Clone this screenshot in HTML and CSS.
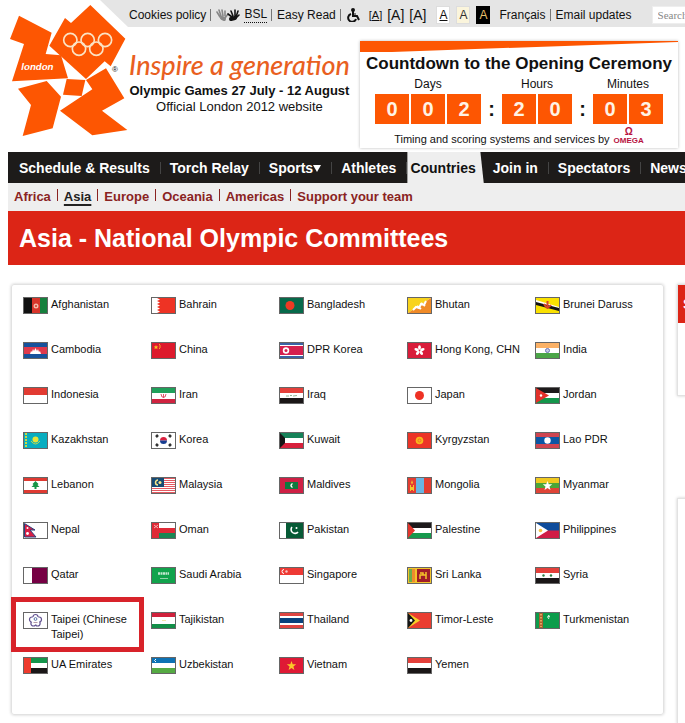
FILE: index.html
```html
<!DOCTYPE html>
<html lang="en">

<head>
    <meta charset="UTF-8">
    <meta name="viewport" content="width=device-width, initial-scale=1.0">
    <link rel="stylesheet" href="styles.css">
    <title>Asia - National Olympic Committees</title>
</head>

<body>
    <header class="header">
        <a href="#" class="logo" aria-label="London 2012">
            <svg viewBox="24 0 363 426" width="121" height="142">
                <g fill="#fd5602">
                    <polygon points="57,47 155,98 137,162 183,166 204,235 36,244 72,132 30,117" />
                    <polygon points="271,15 376,116 332,199 314,184 258,237 148,137 195,54 213,69" />
                    <polygon points="200,237 256,240 245,288 189,284" />
                    <polygon points="54,266 140,243 183,290 158,385 68,408 93,315" />
                    <polygon points="318,205 373,295 306,332 382,390 277,406 180,332 277,268 258,240" />
                </g>
                <g fill="none" stroke="#fbe3c4" stroke-width="5">
                    <circle cx="211" cy="120" r="20" />
                    <circle cx="263" cy="120" r="20" />
                    <circle cx="315" cy="120" r="20" />
                    <circle cx="237" cy="146" r="20" />
                    <circle cx="289" cy="146" r="20" />
                </g>
                <text x="64" y="210" class="logo-name">london</text>
                <text x="336" y="216" class="logo-mark">®</text>
            </svg>
        </a>
        <div class="header-main">
            <div class="toolbar">
                <a href="#">Cookies policy</a>
                <span class="bar"></span>
                <svg class="hands" viewBox="0 0 24 14" width="24" height="14" fill="none" stroke-linecap="round">
                    <g stroke="#888" stroke-width="1.6">
                        <path d="M4 9L1 4M5 8L3 2M7 8L6 2M9 8V3M9 10L12 6" />
                        <path d="M6 10L8 11" stroke-width="4" />
                    </g>
                    <g stroke="#111" stroke-width="1.6">
                        <path d="M16 9L12 6M17 8L15 3M19 8L19 2M20 9L22 3M20 10L23 7" />
                        <path d="M15 11L19 10" stroke-width="4" />
                    </g>
                </svg>
                <a href="#" class="bsl">BSL</a>
                <span class="bar"></span>
                <a href="#">Easy Read</a>
                <span class="bar"></span>
                <svg class="wheelchair" viewBox="0 0 14 14" width="14" height="14" fill="none" stroke="#111" stroke-width="2">
                    <circle cx="7" cy="2" r="1" />
                    <path d="M7 3V8H11L13 12" />
                    <path d="M5 6A4 4 0 1 0 10 11" />
                    <path d="M7 6H10" stroke-width="1" />
                </svg>
                <div class="sizes">
                    <a href="#" class="size-small">[<u>A</u>]</a>
                    <a href="#">[A]</a>
                    <a href="#">[A]</a>
                </div>
                <div class="themes">
                    <button class="theme"><u>A</u></button>
                    <button class="theme theme-cream">A</button>
                    <button class="theme theme-dark">A</button>
                </div>
                <a href="#">Français</a>
                <span class="bar"></span>
                <a href="#">Email updates</a>
                <input type="text" class="search" placeholder="Search" aria-label="Search">
            </div>
            <div class="intro">
                <div class="tagline">
                    <p class="slogan">Inspire a generation</p>
                    <p class="dates">Olympic Games 27 July - 12 August</p>
                    <p class="official">Official London 2012 website</p>
                </div>
                <div class="countdown">
                    <div class="wedge"></div>
                    <h2 class="countdown-title">Countdown to the Opening Ceremony</h2>
                    <div class="clock">
                        <div class="unit">
                            <span>Days</span>
                            <div class="digits"><b>0</b><b>0</b><b>2</b></div>
                        </div>
                        <span class="colon">:</span>
                        <div class="unit">
                            <span>Hours</span>
                            <div class="digits"><b>2</b><b>0</b></div>
                        </div>
                        <span class="colon">:</span>
                        <div class="unit">
                            <span>Minutes</span>
                            <div class="digits"><b>0</b><b>3</b></div>
                        </div>
                    </div>
                    <div class="timing">
                        <span>Timing and scoring systems and services by</span>
                        <span class="omega"><span class="omega-sign">Ω</span>OMEGA</span>
                    </div>
                </div>
            </div>
        </div>
    </header>

    <div class="wrapper">
        <!-- Main navigation -->
        <nav class="nav">
            <a href="#">Schedule &amp; Results</a>
            <a href="#">Torch Relay</a>
            <a href="#">Sports<span class="arrow"></span></a>
            <a href="#">Athletes</a>
            <a href="#" class="current">Countries</a>
            <a href="#">Join in</a>
            <a href="#">Spectators</a>
            <a href="#">News</a>
        </nav>
        <nav class="subnav">
            <a href="#">Africa</a>
            <a href="#" class="current">Asia</a>
            <a href="#">Europe</a>
            <a href="#">Oceania</a>
            <a href="#">Americas</a>
            <a href="#">Support your team</a>
        </nav>
        <h1 class="title">Asia - National Olympic Committees</h1>

        <div class="content">
            <!-- Countries -->
            <ul class="countries">
                <li><svg class="flag" viewBox="0 0 23 15"><path fill="#111" d="M0 0h8v15H0z"/><path fill="#d8352a" d="M8 0h8v15H8z"/><path fill="#15803d" d="M16 0h7v15h-7z"/><circle cx="12" cy="8" r="2.5" fill="#f3b9a8"/><circle cx="12" cy="8" r="1" fill="#d8352a"/></svg><a href="#">Afghanistan</a></li>
                <li><svg class="flag" viewBox="0 0 23 15"><path fill="#ee3324" d="M0 0h23v15H0z"/><path fill="#fff" d="M0 0h5l3 1.500-3 1.500 3 1.500-3 1.500 3 1.500-3 1.500 3 1.500-3 1.500 3 1.500-3 1.500H0z"/></svg><a href="#">Bahrain</a></li>
                <li><svg class="flag" viewBox="0 0 23 15"><path fill="#07694a" d="M0 0h23v15H0z"/><circle cx="10" cy="7.500" r="4.500" fill="#ee3a24"/></svg><a href="#">Bangladesh</a></li>
                <li><svg class="flag" viewBox="0 0 23 15"><path fill="#f8d31c" d="M0 0h23L0 15z"/><path fill="#f08a27" d="M23 0v15H0z"/><path fill="none" stroke="#fff" stroke-width="2" d="M5 12l3-3 3 1 2-4 3 1 2-4M9 8l4 3M13 5l4 3"/></svg><a href="#">Bhutan</a></li>
                <li><svg class="flag" viewBox="0 0 23 15"><path fill="#fae100" d="M0 0h23v15H0z"/><path fill="#fff" d="M0 2l23 7v3L0 5z"/><path fill="#111" d="M0 4l23 6v3L0 7z"/><path fill="none" stroke="#d9442a" stroke-width="2" d="M8 6q3 6 7 1M11.500 3v8"/></svg><a href="#">Brunei Daruss</a></li>

                <li><svg class="flag" viewBox="0 0 23 15"><path fill="#17529c" d="M0 0h23v15H0z"/><path fill="#e0394b" d="M0 4h23v7H0z"/><path fill="#fff" d="M6 11l1-3 1 1 1-3 1 2 1.500-3L13 8l1-2 1 3 1-1 1 3z"/></svg><a href="#">Cambodia</a></li>
                <li><svg class="flag" viewBox="0 0 23 15"><path fill="#dd1a2c" d="M0 0h23v15H0z"/><path fill="#f9c623" d="M4 2l.7 1.500 1.600.1-1.200 1 .4 1.600L4 5.300l-1.500.9.4-1.600-1.200-1 1.600-.1z"/><path fill="none" stroke="#f9a623" d="M7 1l1 1v3L7 6"/></svg><a href="#">China</a></li>
                <li><svg class="flag" viewBox="0 0 23 15"><path fill="#3c63a5" d="M0 0h23v15H0z"/><path fill="#fff" d="M0 2h23v11H0z"/><path fill="#d5204e" d="M0 3h23v9H0z"/><circle cx="6" cy="7.500" r="3.200" fill="#fff"/><circle cx="6" cy="7.500" r="1.500" fill="#d5204e"/></svg><a href="#">DPR Korea</a></li>
                <li><svg class="flag" viewBox="0 0 23 15"><path fill="#d91c3a" d="M0 0h23v15H0z"/><g fill="#fff"><ellipse cx="11.500" cy="4.500" rx="1.400" ry="2.300"/><ellipse cx="11.500" cy="4.500" rx="1.400" ry="2.300" transform="rotate(72 11.500 7.500)"/><ellipse cx="11.500" cy="4.500" rx="1.400" ry="2.300" transform="rotate(144 11.500 7.500)"/><ellipse cx="11.500" cy="4.500" rx="1.400" ry="2.300" transform="rotate(216 11.500 7.500)"/><ellipse cx="11.500" cy="4.500" rx="1.400" ry="2.300" transform="rotate(288 11.500 7.500)"/></g></svg><a href="#">Hong Kong, CHN</a></li>
                <li><svg class="flag" viewBox="0 0 23 15"><path fill="#fff" d="M0 0h23v15H0z"/><path fill="#fbb166" d="M0 0h23v5H0z"/><path fill="#4ba547" d="M0 10h23v5H0z"/><circle cx="11.500" cy="7.500" r="2" fill="#c7cbe5" stroke="#6a72b4"/></svg><a href="#">India</a></li>

                <li><svg class="flag" viewBox="0 0 23 15"><path fill="#fff" d="M0 0h23v15H0z"/><path fill="#e23b32" d="M0 0h23v7H0z"/></svg><a href="#">Indonesia</a></li>
                <li><svg class="flag" viewBox="0 0 23 15"><path fill="#fff" d="M0 0h23v15H0z"/><path fill="#1fa05a" d="M0 0h23v5H0z"/><path fill="#d02340" d="M0 11h23v4H0z"/><path fill="none" stroke="#e0566a" d="M9 6l1 3h3l1-3M11.500 6v4"/></svg><a href="#">Iran</a></li>
                <li><svg class="flag" viewBox="0 0 23 15"><path fill="#fff" d="M0 0h23v15H0z"/><path fill="#e4403b" d="M0 0h23v5H0z"/><path fill="#1a1617" d="M0 10h23v5H0z"/><path fill="none" stroke="#8fb596" d="M6 8h3M10 7.500h2M13 8l4-.5"/></svg><a href="#">Iraq</a></li>
                <li><svg class="flag" viewBox="0 0 23 15"><path fill="#fff" d="M0 0h23v15H0z"/><circle cx="11.500" cy="7.500" r="4.500" fill="#ee3124"/></svg><a href="#">Japan</a></li>
                <li><svg class="flag" viewBox="0 0 23 15"><path fill="#fff" d="M0 0h23v15H0z"/><path fill="#1d1a1b" d="M0 0h23v5H0z"/><path fill="#14964b" d="M0 10h23v5H0z"/><path fill="#e2312a" d="M0 0l13 7.500L0 15z"/><circle cx="5" cy="7.500" r="1.200" fill="#fff"/></svg><a href="#">Jordan</a></li>

                <li><svg class="flag" viewBox="0 0 23 15"><path fill="#08adc0" d="M0 0h23v15H0z"/><circle cx="11.500" cy="6.500" r="3" fill="#e8e337"/><path fill="none" stroke="#b8d84b" d="M7 8q4.500 6 9 0"/><path stroke="#c4d944" stroke-width="2" stroke-dasharray="2 1" d="M2 0v15"/></svg><a href="#">Kazakhstan</a></li>
                <li><svg class="flag" viewBox="0 0 23 15"><path fill="#fff" d="M0 0h23v15H0z"/><path fill="#d9213f" d="M8 7.500a3.500 3.500 0 0 1 7 0z"/><path fill="#173e91" d="M8 7.500a3.500 3.500 0 0 0 7 0z"/><path stroke="#333" stroke-width="2.500" d="M4 4l2-2M17 2l2 2M4 11l2 2M17 13l2-2"/></svg><a href="#">Korea</a></li>
                <li><svg class="flag" viewBox="0 0 23 15"><path fill="#fff" d="M0 0h23v15H0z"/><path fill="#168259" d="M0 0h23v5H0z"/><path fill="#d8203c" d="M0 10h23v5H0z"/><path fill="#161616" d="M0 0l5 5v5l-5 5z"/></svg><a href="#">Kuwait</a></li>
                <li><svg class="flag" viewBox="0 0 23 15"><path fill="#ec3427" d="M0 0h23v15H0z"/><circle cx="11.500" cy="7.500" r="3.800" fill="#f9b61c"/><circle cx="11.500" cy="7.500" r="1.500" fill="none" stroke="#ee7824"/></svg><a href="#">Kyrgyzstan</a></li>
                <li><svg class="flag" viewBox="0 0 23 15"><path fill="#cf4550" d="M0 0h23v15H0z"/><path fill="#0b57a5" d="M0 4h23v7H0z"/><circle cx="11.500" cy="7.500" r="3.200" fill="#fff"/></svg><a href="#">Lao PDR</a></li>

                <li><svg class="flag" viewBox="0 0 23 15"><path fill="#fff" d="M0 0h23v15H0z"/><path fill="#df3a32" d="M0 0h23v3H0zM0 12h23v3H0z"/><path fill="#159447" d="M11.500 3l3 3-1 1 2 2h-3v2h-2V9h-3l2-2-1-1z"/></svg><a href="#">Lebanon</a></li>
                <li><svg class="flag" viewBox="0 0 23 15"><path fill="#fff" d="M0 0h23v15H0z"/><path stroke="#e55a62" d="M0 .5h23M0 2.500h23M0 4.500h23M0 6.500h23M0 8.500h23M0 10.500h23M0 12.500h23M0 14.500h23"/><path fill="#164b75" d="M0 0h12v9H0z"/><path fill="none" stroke="#f5e68b" stroke-width="1.500" d="M6 2a2.500 2.500 0 1 0 0 5"/><circle cx="8" cy="4.500" r="1.500" fill="#f5e68b"/></svg><a href="#">Malaysia</a></li>
                <li><svg class="flag" viewBox="0 0 23 15"><path fill="#cf2045" d="M0 0h23v15H0z"/><path fill="#0e7a3f" d="M5 4h13v7H5z"/><path fill="none" stroke="#fff" stroke-width="1.500" d="M12.500 5.500q-3 2 0 4"/></svg><a href="#">Maldives</a></li>
                <li><svg class="flag" viewBox="0 0 23 15"><path fill="#e43d31" d="M0 0h23v15H0z"/><path fill="#69b5e3" d="M8 0h8v15H8z"/><path fill="#f7c72a" d="M2 7h1v6H2zM5 7h1v6H5zM3 9h2v3H3zM4 2l1 3-1 1-1-1z"/></svg><a href="#">Mongolia</a></li>
                <li><svg class="flag" viewBox="0 0 23 15"><path fill="#f0c920" d="M0 0h23v5H0z"/><path fill="#4ba638" d="M0 5h23v5H0z"/><path fill="#df4437" d="M0 10h23v5H0z"/><path fill="#fff" d="M11.500 3l1.300 3.300h3.500l-2.800 2.200 1 3.500-3-2-3 2 1-3.500-2.800-2.200h3.500z"/></svg><a href="#">Myanmar</a></li>

                <li><svg class="flag" viewBox="0 0 23 15"><path fill="#fff" d="M0 0h23v15H0z"/><path fill="#d91f45" stroke="#27427f" d="M.5.5L11 7H6l6 7H.5z"/><circle cx="3.500" cy="5" r="1" fill="#fff"/><circle cx="3.500" cy="10.500" r="1.400" fill="#fff"/></svg><a href="#">Nepal</a></li>
                <li><svg class="flag" viewBox="0 0 23 15"><path fill="#fff" d="M0 0h23v5H0z"/><path fill="#df2a37" d="M0 0h7v15H0zM7 5h16v5H7z"/><path fill="#198754" d="M7 10h16v5H7z"/><path stroke="#f7b1b1" d="M2 2l4 3M6 2L2 5"/></svg><a href="#">Oman</a></li>
                <li><svg class="flag" viewBox="0 0 23 15"><path fill="#fff" d="M0 0h23v15H0z"/><path fill="#075a36" d="M6 0h17v15H6z"/><path fill="none" stroke="#fff" stroke-width="1.600" d="M12 4a3.500 3.500 0 1 0 6 5"/><circle cx="16.500" cy="5" r="1" fill="#fff"/></svg><a href="#">Pakistan</a></li>
                <li><svg class="flag" viewBox="0 0 23 15"><path fill="#fff" d="M0 0h23v15H0z"/><path fill="#1d1a1b" d="M0 0h23v5H0z"/><path fill="#16994d" d="M0 10h23v5H0z"/><path fill="#e4362d" d="M0 0l7 7.500L0 15z"/></svg><a href="#">Palestine</a></li>
                <li><svg class="flag" viewBox="0 0 23 15"><path fill="#0e4c9b" d="M0 0h23v8H0z"/><path fill="#d01c45" d="M0 7.500h23V15H0z"/><path fill="#fff" d="M0 0l12 7.500L0 15z"/><circle cx="4.500" cy="7.500" r="1.800" fill="#f6c344"/></svg><a href="#">Philippines</a></li>

                <li><svg class="flag" viewBox="0 0 23 15"><path fill="#fff" d="M0 0h23v15H0z"/><path fill="#760044" d="M8 0h15v15H8z"/></svg><a href="#">Qatar</a></li>
                <li><svg class="flag" viewBox="0 0 23 15"><path fill="#11a34c" d="M0 0h23v15H0z"/><path stroke="#c2e8cf" stroke-width="2.500" stroke-dasharray="2 .5" d="M6 5.500h11"/><path stroke="#8fd3a8" d="M8 10.500h8"/></svg><a href="#">Saudi Arabia</a></li>
                <li><svg class="flag" viewBox="0 0 23 15"><path fill="#fff" d="M0 0h23v15H0z"/><path fill="#ee3a35" d="M0 0h23v7H0z"/><path fill="none" stroke="#fff" d="M4 1.500a2 2 0 1 0 0 4"/><circle cx="6.500" cy="3.500" r="1.200" fill="#f9c5c3"/></svg><a href="#">Singapore</a></li>
                <li><svg class="flag" viewBox="0 0 23 15"><path fill="#f3c52a" d="M0 0h23v15H0z"/><path fill="#6dae4a" d="M1 1h3v13H1z"/><path fill="#ef8b2d" d="M4 1h3v13H4z"/><path fill="#a11c28" d="M9 1h13v13H9z"/><path fill="none" stroke="#f3c52a" stroke-width="1.500" d="M12 11V7h6v4M12 5h3v2M18 7V4"/></svg><a href="#">Sri Lanka</a></li>
                <li><svg class="flag" viewBox="0 0 23 15"><path fill="#fff" d="M0 0h23v15H0z"/><path fill="#e4403b" d="M0 0h23v5H0z"/><path fill="#1a1617" d="M0 10h23v5H0z"/><circle cx="7.500" cy="7.500" r="1.200" fill="#2e7d43"/><circle cx="15" cy="7.500" r="1.200" fill="#2e7d43"/></svg><a href="#">Syria</a></li>

                <li class="highlighted"><svg class="flag" viewBox="0 0 23 15"><path fill="#fff" d="M0 0h23v15H0z"/><g fill="#fff" stroke="#635391" stroke-width="1.200"><circle cx="11.500" cy="4" r="2.500"/><circle cx="15" cy="6.500" r="2.500"/><circle cx="13.600" cy="10.500" r="2.500"/><circle cx="9.400" cy="10.500" r="2.500"/><circle cx="8" cy="6.500" r="2.500"/></g><circle cx="11.500" cy="7.500" r="4" fill="#fff"/><circle cx="11.500" cy="6" r="1.400" fill="none" stroke="#5873a8"/><path stroke="#b59aa9" d="M9.500 9.500h4"/></svg><a href="#">Taipei (Chinese Taipei)</a></li>
                <li><svg class="flag" viewBox="0 0 23 15"><path fill="#fff" d="M0 0h23v15H0z"/><path fill="#d0213c" d="M0 0h23v4H0z"/><path fill="#128f48" d="M0 11h23v4H0z"/><path stroke="#f7e3a8" d="M10 7.500h4"/></svg><a href="#">Tajikistan</a></li>
                <li><svg class="flag" viewBox="0 0 23 15"><path fill="#df4541" d="M0 0h23v15H0z"/><path fill="#fff" d="M0 3h23v9H0z"/><path fill="#08427d" d="M0 5h23v5H0z"/></svg><a href="#">Thailand</a></li>
                <li><svg class="flag" viewBox="0 0 23 15"><path fill="#ea3d30" d="M0 0h23v15H0z"/><path fill="#f8cf26" d="M0 0l12 7.500L0 15z"/><path fill="#151515" d="M0 0l7 7.500L0 15z"/><circle cx="3" cy="7.500" r="1.400" fill="#fff"/></svg><a href="#">Timor-Leste</a></li>
                <li><svg class="flag" viewBox="0 0 23 15"><path fill="#0c9c4b" d="M0 0h23v15H0z"/><path fill="#a9602f" d="M3 0h4v15H3z"/><path stroke="#e3a661" stroke-width="2" stroke-dasharray="1.500 1.500" d="M5 1v13"/><path fill="none" stroke="#d8f0df" d="M13 2q-3 2 0 4"/><circle cx="13" cy="3.500" r="1" fill="#d8f0df"/></svg><a href="#">Turkmenistan</a></li>

                <li><svg class="flag" viewBox="0 0 23 15"><path fill="#fff" d="M0 0h23v15H0z"/><path fill="#13944b" d="M0 0h23v5H0z"/><path fill="#1a1617" d="M0 10h23v5H0z"/><path fill="#ee3a2d" d="M0 0h7v15H0z"/></svg><a href="#">UA Emirates</a></li>
                <li><svg class="flag" viewBox="0 0 23 15"><path fill="#fff" d="M0 0h23v15H0z"/><path fill="#0d72b4" d="M0 0h23v5H0z"/><path fill="#55aa43" d="M0 10h23v5H0z"/><path fill="none" stroke="#fff" d="M4 1q-3 1.500 0 3"/></svg><a href="#">Uzbekistan</a></li>
                <li><svg class="flag" viewBox="0 0 23 15"><path fill="#df1935" d="M0 0h23v15H0z"/><path fill="#fbc829" d="M11.500 3l1.200 3.300h3.500l-2.800 2.200 1 3.500-2.900-2-2.900 2 1-3.500-2.800-2.200h3.500z"/></svg><a href="#">Vietnam</a></li>
                <li><svg class="flag" viewBox="0 0 23 15"><path fill="#fff" d="M0 0h23v15H0z"/><path fill="#e4403b" d="M0 0h23v5H0z"/><path fill="#1a1617" d="M0 10h23v5H0z"/></svg><a href="#">Yemen</a></li>
            </ul>

            <aside class="sidebar">
                <div class="box box-sports">
                    <h2 class="box-title">S</h2>
                </div>
                <div class="box box-tall"></div>
            </aside>
        </div>
    </div>
</body>
</html>
```

FILE: styles.css
```css
*, *::before, *::after {
    box-sizing: border-box;
}

body {
    margin: 0;
    overflow: hidden;
    background-color: #fff;
    color: #111;
    font-family: "Liberation Sans", Arial, sans-serif;
    font-size: 12px;
    line-height: 15px;
}

a {
    color: inherit;
    text-decoration: none;
}

p, h1, h2, ul {
    margin: 0;
    padding: 0;
}

/* Header */
.header {
    display: flex;
    height: 152px;
    padding-left: 8px;
}

.logo svg {
    display: block;
}

.logo-name {
    fill: #fff;
    font-size: 29px;
    font-weight: bold;
    font-style: italic;
}

.logo-mark {
    fill: #111;
    font-size: 24px;
}

.header-main {
    flex: 1;
    min-width: 0;
}

.toolbar {
    display: flex;
    align-items: center;
    gap: 4px;
    height: 27px;
    margin-left: -29px;
    padding: 3px 0 0 29px;
    background-color: #e5e5e5;
    clip-path: polygon(0 0, 100% 0, 100% 100%, 28px 100%);
    white-space: nowrap;
}

.toolbar > * {
    flex-shrink: 0;
}

.bar {
    width: 1px;
    height: 12px;
    margin-right: 1px;
    background-color: #777;
}

.bsl {
    border-bottom: 1px dotted #111;
}

.sizes {
    display: flex;
    align-items: center;
    gap: 5px;
    margin: 0 6px 0 5px;
    font-size: 14px;
}

.size-small {
    font-size: 11px;
}

.themes {
    display: flex;
    gap: 6px;
    margin-right: 5px;
}

.theme {
    width: 14px;
    height: 18px;
    padding: 0;
    border: 1px solid #ddd;
    background-color: #fff;
    color: #111;
    font-family: inherit;
    font-size: 12px;
    line-height: 15px;
}

.theme-cream {
    background-color: #fbf5dc;
    color: #333;
}

.theme-dark {
    border-color: #000;
    background-color: #000;
    color: #e8bf6a;
}

.search {
    width: 150px;
    height: 18px;
    margin-left: 16px;
    padding: 0 5px;
    border: 1px solid #eee;
    font-family: "Liberation Serif", serif;
    font-size: 11px;
}

.search::placeholder {
    color: #888;
}

.intro {
    display: flex;
    justify-content: space-between;
    padding: 14px 7px 0 0;
}

.tagline {
    padding-top: 6px;
    text-align: center;
    white-space: nowrap;
}

.slogan {
    color: #e9601f;
    font-family: Lato, sans-serif;
    font-size: 27px;
    font-style: italic;
    font-weight: 500;
    line-height: 36px;
}

.dates, .official {
    font-size: 13px;
    line-height: 16px;
}

.dates {
    font-weight: bold;
}

/* Countdown */
.countdown {
    width: 318px;
    height: 107px;
    background-color: #fff;
    box-shadow: 0 0 3px #bbb;
    text-align: center;
}

.wedge {
    height: 11px;
    background-color: #fd5602;
    clip-path: polygon(0 0, 100% 0, 100% 1px, 10% 100%, 0 100%);
}

.countdown-title {
    font-size: 17px;
    line-height: 24px;
    white-space: nowrap;
}

.clock {
    display: flex;
    justify-content: center;
}

.unit span {
    display: block;
    line-height: 16px;
}

.digits {
    display: flex;
    gap: 2px;
    padding-top: 2px;
}

.digits b {
    width: 34px;
    background-color: #fd5602;
    color: #fff3e6;
    font-size: 20px;
    font-weight: bold;
    line-height: 30px;
}

.colon {
    width: 21px;
    padding-top: 18px;
    font-size: 20px;
    font-weight: bold;
    line-height: 30px;
}

.timing {
    display: flex;
    justify-content: center;
    align-items: flex-end;
    gap: 4px;
    padding-top: 3px;
    font-size: 11px;
    line-height: 16px;
}

.omega {
    display: flex;
    flex-direction: column;
    margin-bottom: 2px;
    color: #b8123f;
    font-size: 8px;
    font-weight: bold;
    line-height: 9px;
}

.omega-sign {
    font-size: 10px;
}

/* Navigation */
.wrapper {
    margin-left: 8px;
}

.nav {
    display: flex;
    height: 31px;
    padding-left: 2px;
    background-color: #1d1b1a;
    color: #fff;
    font-size: 14px;
    font-weight: bold;
    line-height: 32px;
    white-space: nowrap;
}

.nav a {
    display: flex;
    align-items: center;
    padding-left: 9px;
}

.nav a::after {
    content: "";
    width: 1px;
    height: 12px;
    margin-left: 10px;
    background-color: #444;
}

.nav .current {
    padding: 0 8px 0 3px;
    background-color: #eee;
    clip-path: polygon(0 0, 73px 0, 100% 100%, 0 100%);
    color: #111;
}

.nav .current::after {
    display: none;
}

.arrow {
    margin-top: 2px;
    border: 4px solid transparent;
    border-top: 7px solid #fff;
    border-bottom: 0;
}

.subnav {
    display: flex;
    height: 28px;
    padding: 6px 0 0 6px;
    background-color: #eee;
    color: #8a2322;
    font-size: 13px;
    font-weight: bold;
    line-height: 16px;
    white-space: nowrap;
}

.subnav a + a::before {
    content: "";
    display: inline-block;
    width: 1px;
    height: 12px;
    margin: 0 6px;
    background-color: #8a2322;
}

.subnav .current {
    color: #222;
    text-decoration: underline 2px;
    text-underline-offset: 3px;
}

.title {
    padding: 0 11px;
    background-color: #dc2516;
    color: #fff;
    font-size: 25px;
    line-height: 54px;
    white-space: nowrap;
}

/* Content */
.content {
    display: flex;
    gap: 13px;
    padding: 19px 0 9px 3px;
}

.countries {
    display: grid;
    flex: 1;
    grid-template-columns: repeat(5, minmax(128px, 1fr));
    grid-auto-rows: 45px;
    padding: 12px 0 12px 11px;
    border: 1px solid #e2e2e2;
    border-radius: 3px;
    box-shadow: 0 0 3px #ccc;
    font-size: 11px;
    list-style: none;
}

.countries li {
    position: relative;
    display: flex;
    align-items: flex-start;
    gap: 3px;
}

.flag {
    flex-shrink: 0;
    width: 25px;
    height: 17px;
    border: 1px solid #666;
}

.highlighted::after {
    content: "";
    position: absolute;
    top: -15px;
    left: -12px;
    width: 133px;
    height: 55px;
    border: 5px solid #d8232a;
}

.sidebar {
    display: flex;
    flex: 0 0 300px;
    flex-direction: column;
    margin: 0 -291px -9px 0;
}

.box {
    border: 1px solid #e2e2e2;
    box-shadow: 0 0 3px #ccc;
}

.box-sports {
    height: 112px;
    margin-bottom: 102px;
}

.box-title {
    padding-left: 5px;
    background-color: #dc2516;
    color: #fff;
    font-size: 14px;
    line-height: 38px;
}

.box-tall {
    flex: 1;
    border-bottom: 0;
}
```
